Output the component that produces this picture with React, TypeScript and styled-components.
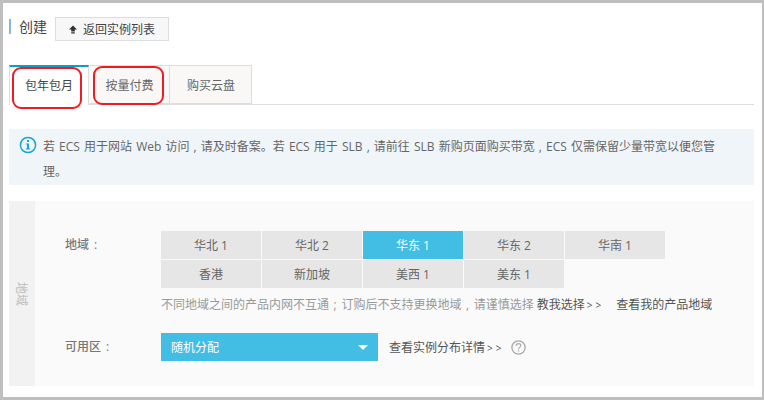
import styled, { createGlobalStyle } from 'styled-components';

const GlobalStyle = createGlobalStyle`
  html, body {
    margin: 0;
    padding: 0;
    background: #fff;
  }
`;

const regions = ['华北 1', '华北 2', '华东 1', '华东 2', '华南 1', '香港', '新加坡', '美西 1', '美东 1'];

const App = () => {
  return (
    <Frame>
      <GlobalStyle />
      <Heading>
        <Title>创建</Title>
        <BackButton>
          <svg width="8" height="9" viewBox="0 0 8 9">
            <path d="M4 0.5 L8 4.5 H5.8 V6.5 H2.2 V4.5 H0 Z M2.2 7.2 H5.8 V8.6 H2.2 Z" fill="#333" />
          </svg>
          返回实例列表
        </BackButton>
      </Heading>
      <Tabs>
        <Tab $width={80} $active>
          包年包月
          <Mark $width={70} $height={42} $left={2} />
        </Tab>
        <Tab $width={81}>
          按量付费
          <Mark $width={71} $height={39} $left={3} />
        </Tab>
        <Tab $width={82}>购买云盘</Tab>
      </Tabs>
      <Notice>
        <svg width="18" height="18" viewBox="0 0 18 18">
          <circle cx="9" cy="9" r="7.6" fill="none" stroke="#17a5d2" strokeWidth="1.5" />
          <rect x="8" y="4" width="2" height="2" fill="#17a5d2" />
          <path d="M6.8 7.4 H10 V12.4 H11.2 V13.6 H6.8 V12.4 H8 V8.6 H6.8 Z" fill="#17a5d2" />
        </svg>
        <NoticeText>
          若 ECS 用于网站 Web 访问 , 请及时备案。若 ECS 用于 SLB , 请前往 SLB 新购页面购买带宽 , ECS 仅需保留少量带宽以便您管理。
        </NoticeText>
      </Notice>
      <Panel>
        <Side>
          <SideLabel>地域</SideLabel>
        </Side>
        <Body>
          <Row>
            <RowLabel>地域 :</RowLabel>
            <RowContent>
              <RegionGrid>
                {regions.map((name) => (
                  <Region key={name} $active={name === '华东 1'}>
                    {name}
                  </Region>
                ))}
              </RegionGrid>
              <Hint>
                不同地域之间的产品内网不互通 ; 订购后不支持更换地域 , 请谨慎选择
                <HintLink>教我选择<Arrows>&gt;&gt;</Arrows></HintLink>
                <HintLink $gap>查看我的产品地域</HintLink>
              </Hint>
            </RowContent>
          </Row>
          <ZoneRow>
            <RowLabel>可用区 :</RowLabel>
            <Select>
              随机分配
              <Caret />
            </Select>
            <ZoneLink>查看实例分布详情<Arrows>&gt;&gt;</Arrows></ZoneLink>
            <svg width="15" height="15" viewBox="0 0 15 15">
              <circle cx="7.5" cy="7.5" r="6.6" fill="none" stroke="#aaa" strokeWidth="1.3" />
              <path d="M5.2 5.8 C5.2 2.9 9.8 2.9 9.8 5.6 C9.8 7.3 7.5 7.4 7.5 9.2" fill="none" stroke="#aaa" strokeWidth="1.2" />
              <rect x="6.9" y="10.2" width="1.3" height="1.3" fill="#aaa" />
            </svg>
          </ZoneRow>
        </Body>
      </Panel>
    </Frame>
  );
};

const FONT = `"Open Sans", "Noto Sans CJK SC", sans-serif`;

const Frame = styled.div`
  box-sizing: border-box;
  width: 764px;
  height: 400px;
  overflow: hidden;
  border: solid #bfbfbf;
  border-width: 3px 2px 3px 3px;
  padding: 14px 8px 0 6px;
  font-family: ${FONT};
  font-size: 12px;
  color: #666;
  background: #fff;
`;

const Heading = styled.div`
  display: flex;
  align-items: center;
  height: 24px;
`;

const Title = styled.h1`
  margin: 0 8px 0 0;
  padding-left: 8px;
  height: 15px;
  border-left: 2px solid #88b7e0;
  font-size: 14px;
  font-weight: 400;
  line-height: 15px;
  color: #444;
  position: relative;
  top: -3px;
`;

const BackButton = styled.button`
  box-sizing: border-box;
  display: flex;
  align-items: center;
  justify-content: center;
  gap: 6px;
  width: 114px;
  height: 24px;
  padding: 0;
  border: 1px solid #ddd;
  background: #f7f7f7;
  font: inherit;
  color: #444;
`;

const Tabs = styled.div`
  display: flex;
  height: 39px;
  margin-top: 24px;
  border-bottom: 1px solid #ddd;
`;

const Tab = styled.div<{ $active?: boolean; $width: number }>`
  box-sizing: border-box;
  position: relative;
  width: ${(p) => p.$width}px;
  height: ${(p) => (p.$active ? 40 : 39)}px;
  padding-bottom: ${(p) => (p.$active ? 2 : 0)}px;
  display: flex;
  align-items: center;
  justify-content: center;
  border: 1px solid #ddd;
  border-left-color: ${(p) => (p.$active ? '#ddd' : 'transparent')};
  border-top: ${(p) => (p.$active ? '2px solid #0aa0c8' : '1px solid #ddd')};
  border-bottom: ${(p) => (p.$active ? 'none' : '1px solid #ddd')};
  background: ${(p) => (p.$active ? '#fff' : '#faf8f7')};
  color: ${(p) => (p.$active ? '#444' : '#666')};
`;

const Mark = styled.span<{ $width: number; $height: number; $left: number }>`
  box-sizing: border-box;
  position: absolute;
  top: 0;
  left: ${(p) => p.$left}px;
  width: ${(p) => p.$width}px;
  height: ${(p) => p.$height}px;
  border: 2px solid #ed1c24;
  border-radius: 9px;
`;

const Notice = styled.div`
  box-sizing: border-box;
  display: flex;
  gap: 6px;
  height: 56px;
  margin-top: 24px;
  padding: 5px 30px 0 10px;
  background: #f0f5f9;
  line-height: 25px;
  svg {
    margin-top: 2px;
    flex: none;
  }
`;

const NoticeText = styled.div`
  width: 680px;
  word-spacing: 1px;
`;

const Panel = styled.div`
  display: flex;
  height: 185px;
  margin-top: 16px;
  background: #fafafa;
`;

const Side = styled.div`
  width: 26px;
  flex: none;
  display: flex;
  align-items: center;
  justify-content: center;
  background: #f2f2f2;
`;

const SideLabel = styled.span`
  transform: rotate(90deg);
  white-space: nowrap;
  color: #c4c4c4;
  font-size: 12px;
  font-weight: 500;
`;

const Body = styled.div`
  flex: 1;
  padding: 30px 0 0 30px;
`;

const Row = styled.div`
  display: flex;
`;

const RowLabel = styled.div`
  width: 96px;
  flex: none;
  line-height: 28px;
  color: #777;
  font-weight: 500;
  word-spacing: 2px;
`;

const RowContent = styled.div`
  flex: 1;
`;

const RegionGrid = styled.div`
  display: grid;
  grid-template-columns: repeat(5, 100px);
  grid-auto-rows: 28px;
  gap: 1px;
`;

const Region = styled.div<{ $active?: boolean }>`
  display: flex;
  align-items: center;
  justify-content: center;
  background: ${(p) => (p.$active ? '#42bde4' : '#e6e6e6')};
  color: ${(p) => (p.$active ? '#fff' : '#666')};
`;

const Hint = styled.div`
  margin-top: 8px;
  line-height: 18px;
  color: #999;
  white-space: nowrap;
  word-spacing: 1.5px;
`;

const HintLink = styled.span<{ $gap?: boolean }>`
  margin-left: ${(p) => (p.$gap ? 12 : 3)}px;
  color: #555;
`;

const Arrows = styled.span`
  margin-left: 2px;
  font-size: 10px;
  letter-spacing: 3px;
`;

const ZoneRow = styled.div`
  display: flex;
  align-items: center;
  margin-top: 19px;
  svg {
    margin-left: 7px;
  }
`;

const Select = styled.div`
  box-sizing: border-box;
  display: flex;
  align-items: center;
  justify-content: space-between;
  width: 217px;
  height: 28px;
  padding: 0 10px;
  background: #42bde4;
  color: #fff;
`;

const Caret = styled.span`
  width: 0;
  height: 0;
  border: 5px solid transparent;
  border-top: 5px solid #fff;
  border-bottom: 0;
`;

const ZoneLink = styled.span`
  margin-left: 11px;
  color: #555;
`;

export default App;
